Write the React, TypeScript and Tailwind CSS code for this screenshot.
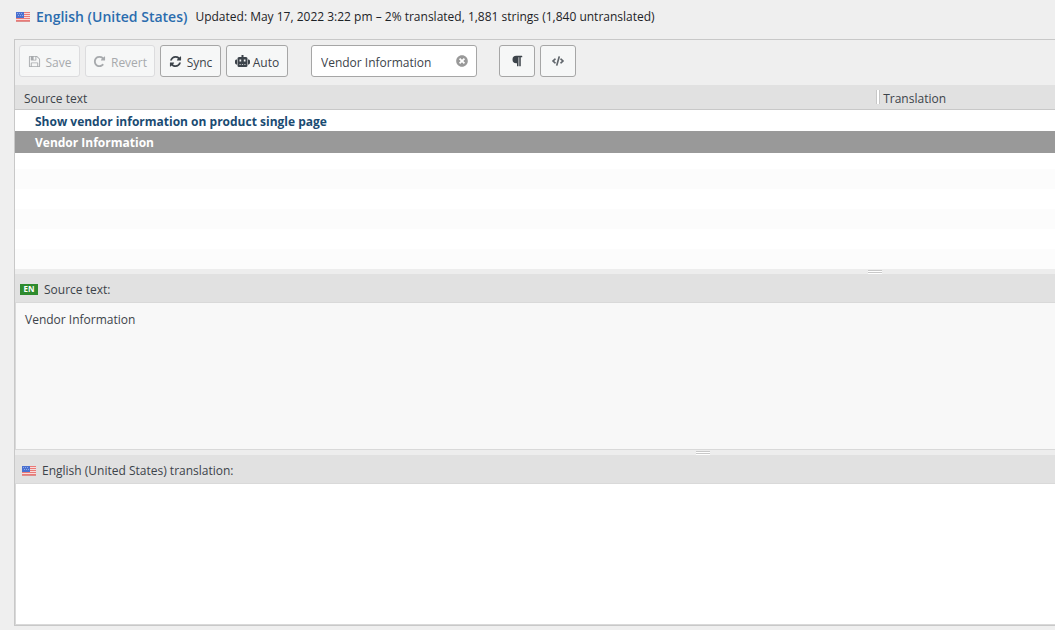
import { useState } from 'react'
import type { ReactNode } from 'react'
import { FaCode, FaParagraph, FaTimesCircle } from 'react-icons/fa'

interface StringRow {
  id: number
  source: string
  translation: string
}

const strings: StringRow[] = [
  { id: 1, source: 'Show vendor information on product single page', translation: '' },
  { id: 2, source: 'Vendor Information', translation: '' },
]

const icons = {
  save: 'M512 1536h768v-384h-768v384zm896 0h128v-896q0-14-10-38.5t-20-34.5l-281-281q-10-10-34-20t-39-10v416q0 40-28 68t-68 28h-576q-40 0-68-28t-28-68v-416h-128v1280h128v-416q0-40 28-68t68-28h832q40 0 68 28t28 68v416zm-384-928v-320q0-13-9.5-22.5t-22.5-9.5h-192q-13 0-22.5 9.5t-9.5 22.5v320q0 13 9.5 22.5t22.5 9.5h192q13 0 22.5-9.5t9.5-22.5zm640 32v928q0 40-28 68t-68 28h-1344q-40 0-68-28t-28-68v-1344q0-40 28-68t68-28h928q40 0 88 20t76 48l280 280q28 28 48 76t20 88z',
  revert: 'M1664 256v448q0 26-19 45t-45 19h-448q-42 0-59-40-17-39 14-69l138-138q-148-137-349-137-104 0-198.5 40.5t-163.5 109.5-109.5 163.5-40.5 198.5 40.5 198.5 109.5 163.5 163.5 109.5 198.5 40.5q119 0 225-52t179-147q7-10 23-12 15 0 25 9l137 138q9 8 9.5 20.5t-7.5 22.5q-109 132-264 204.5t-327 72.5q-156 0-298-61t-245-164-164-245-61-298 61-298 164-245 245-164 298-61q147 0 284.5 55.5t244.5 156.5l130-129q29-31 70-14 39 17 39 59z',
  sync: 'M1639 1056q0 5-1 7-64 268-268 434.5t-478 166.5q-146 0-282.5-55t-243.5-157l-129 129q-19 19-45 19t-45-19-19-45v-448q0-26 19-45t45-19h448q26 0 45 19t19 45-19 45l-137 137q71 66 161 102t187 36q134 0 250-65t186-179q11-17 53-117 8-23 30-23h192q13 0 22.5 9.5t9.5 22.5zm25-800v448q0 26-19 45t-45 19h-448q-26 0-45-19t-19-45 19-45l138-138q-148-137-349-137-134 0-250 65t-186 179q-11 17-53 117-8 23-30 23h-199q-13 0-22.5-9.5t-9.5-22.5v-7q65-268 270-434.5t480-166.5q146 0 284 55.5t245 156.5l130-129q19-19 45-19t45 19 19 45z',
}

function Icon({ path }: { path: string }) {
  return (
    <svg viewBox="0 0 1792 1792" className="size-[13px] shrink-0 fill-current" aria-hidden="true">
      <path d={path} />
    </svg>
  )
}

function Robot() {
  return (
    <svg viewBox="0 0 15 12" className="h-3 w-[15px] shrink-0 fill-current" aria-hidden="true">
      <path
        fillRule="evenodd"
        d="M6.500 0h2v2h2.500q1.500 0 1.500 1.500v7q0 1.500-1.500 1.500h-7q-1.500 0-1.500-1.500v-7q0-1.500 1.500-1.500h2.500zM4.500 4.500v2h1.700v-2zM8.800 4.500v2h1.700v-2zM4.500 9v.8h1.200v-.8zM6.900 9v.8h1.200v-.8zM9.300 9v.8h1.200v-.8z"
      />
      <path d="M1.200 4.500h.8v5h-.8q-1.200-.4-1.200-1.400v-2.200q0-1 1.200-1.400zM13.800 4.500h-.8v5h.8q1.200-.4 1.200-1.400v-2.200q0-1-1.200-1.400z" />
    </svg>
  )
}

function Flag() {
  return (
    <svg viewBox="0 0 14 10" className="h-[10px] w-[14px] shrink-0" aria-hidden="true">
      <rect width="14" height="10" fill="#f6dcdc" />
      <path d="M0 .5h14M0 2.5h14M0 4.5h14M0 6.5h14M0 8.5h14" stroke="#ea7a77" />
      <path d="M0 9.5h14" stroke="#dc8f8d" />
      <rect width="8" height="6" fill="#4a70d0" />
      <path d="M1 1.500h6M2 3.500h5" stroke="#8fabe8" strokeDasharray="1 1" />
    </svg>
  )
}

function ToolButton({ className, disabled, label, children }: {
  className: string
  disabled?: boolean
  label?: string
  children: ReactNode
}) {
  return (
    <button
      type="button"
      disabled={disabled}
      aria-label={label}
      className={`flex h-8 shrink-0 items-center justify-center rounded-[3px] border border-[#a6a6a6] bg-[#f6f7f7] text-[#3c434a] disabled:border-[#dcdcde] disabled:text-[#a7aaad] ${className}`}
    >
      {children}
    </button>
  )
}

// Drag bar between two panes
function Splitter({ className }: { className: string }) {
  return (
    <div className="h-[5px] bg-[#ededed] pt-px">
      <div className={`h-1 w-[14px] border-y border-t-[#c8c8c8] border-b-white bg-[#c8c8c8] ${className}`}>
        <div className="h-px bg-white" />
      </div>
    </div>
  )
}

export default function App() {
  const [filter, setFilter] = useState('Vendor Information')
  const [selected, setSelected] = useState(2)
  const [translation, setTranslation] = useState('')

  return (
    <main className="min-h-screen overflow-hidden bg-[#efefef] pb-1 pl-[14px] font-['Open_Sans',sans-serif] text-xs text-[#3c434a]">
      <header className="flex h-[39px] items-center pb-[6px] pl-[2px] text-[#1d2327]">
        <Flag />
        <h1 className="ml-[6px] text-sm font-semibold text-[#2a6cae]">English (United States)</h1>
        <p className="ml-2">Updated: May 17, 2022 3:22 pm – 2% translated, 1,881 strings (1,840 untranslated)</p>
      </header>

      <div className="border-y border-l border-[#c8c8c8]">
        <div className="flex h-[45px] items-center gap-[5px] pb-[3px] pl-1">
          <ToolButton className="w-[61px] gap-[5px]" disabled>
            <Icon path={icons.save} />
            <span className="pt-[3px]">Save</span>
          </ToolButton>
          <ToolButton className="w-[70px] gap-[5px]" disabled>
            <Icon path={icons.revert} />
            <span className="pt-[3px]">Revert</span>
          </ToolButton>
          <ToolButton className="w-[61px] gap-[5px]">
            <Icon path={icons.sync} />
            <span className="pt-[3px]">Sync</span>
          </ToolButton>
          <ToolButton className="w-[62px] gap-[3px]">
            <Robot />
            <span className="pt-[3px]">Auto</span>
          </ToolButton>
          <div className="ml-[18px] flex h-8 w-[166px] items-center rounded-[3px] border border-[#a6a6a6] bg-white pr-2 pl-[9px]">
            <input
              type="text"
              aria-label="Filter strings"
              value={filter}
              onChange={e => setFilter(e.target.value)}
              className="min-w-0 flex-1 pt-[3px] outline-none"
            />
            <button type="button" aria-label="Clear filter" onClick={() => setFilter('')} className="text-[#999999]">
              <FaTimesCircle className="size-3" />
            </button>
          </div>
          <ToolButton className="ml-[17px] w-9" label="Show invisibles">
            <FaParagraph className="size-3" />
          </ToolButton>
          <ToolButton className="w-9" label="Code view">
            <FaCode className="size-3 opacity-80" />
          </ToolButton>
        </div>

        <table className="w-full table-fixed border-separate border-spacing-0 text-left">
          <thead>
            <tr className="h-[25px] bg-[#e1e1e1]">
              <th className="w-[83%] border-b border-[#c8c8c8] p-0 pt-[3px] pl-[9px] font-normal">Source text</th>
              <th className="border-b border-[#c8c8c8] p-0 font-normal">
                <div className="-ml-0.5 flex items-center">
                  <span className="h-[14px] w-[4px] border-x border-[#c8c8c8] bg-white" />
                  <span className="ml-[3px] pt-[3px]">Translation</span>
                </div>
              </th>
            </tr>
          </thead>
          <tbody>
            {strings.map(row =>
              <tr
                key={row.id}
                onClick={() => setSelected(row.id)}
                className={`font-bold ${row.id === selected ? 'h-[22px] bg-[#999999] text-white' : 'h-[21px] bg-white text-[#1a4b72]'}`}
              >
                <td className="p-0 pt-0.5 pl-5">{row.source}</td>
                <td className="p-0">{row.translation}</td>
              </tr>
            )}
          </tbody>
        </table>
        {/* Empty striped area under the rows */}
        <div className="bg-white pt-4">
          <div className="h-5 bg-[#fcfcfc]" />
          <div className="h-5" />
          <div className="h-5 bg-[#fcfcfc]" />
          <div className="h-5" />
          <div className="h-5 bg-[#fcfcfc]" />
        </div>

        <Splitter className="ml-[82%]" />

        <section>
          <label htmlFor="source" className="flex h-[29px] items-center border-b border-[#d9d9d9] bg-[#e1e1e1] pt-[3px] pl-[5px]">
            <span className="flex h-[11px] w-[18px] items-center justify-center bg-[#2e8b2e] text-[8px] font-bold text-white">EN</span>
            <span className="ml-[6px]">Source text:</span>
          </label>
          <textarea
            id="source"
            readOnly
            value="Vendor Information"
            className="block h-[147px] w-full resize-none border-b border-l border-[#d9d9d9] bg-[#f8f8f8] p-[9px] outline-none"
          />
        </section>

        <Splitter className="ml-[65.5%]" />

        <section>
          <label htmlFor="translation" className="flex h-[29px] items-center border-b border-[#d9d9d9] bg-[#e1e1e1] pt-[3px] pl-[7px]">
            <Flag />
            <span className="ml-[6px]">English (United States) translation:</span>
          </label>
          <textarea
            id="translation"
            value={translation}
            onChange={e => setTranslation(e.target.value)}
            className="block h-[141px] w-full resize-none border-b border-l border-[#d9d9d9] bg-white p-[9px] outline-none"
          />
        </section>
      </div>
    </main>
  )
}
